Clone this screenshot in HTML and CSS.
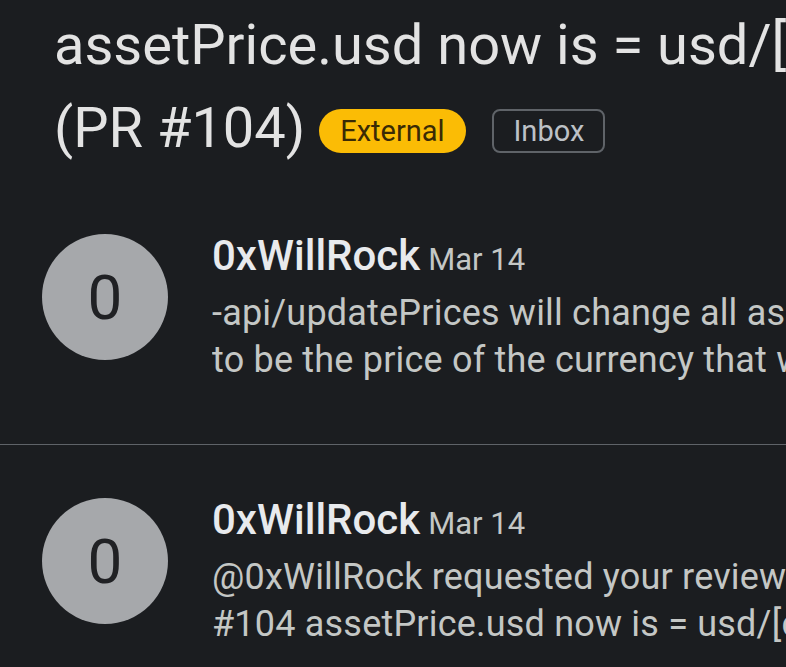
FILE: index.html
```html
<!DOCTYPE html>
<html lang="en">
  <head>
    <meta charset="UTF-8" />
    <meta name="viewport" content="width=device-width, initial-scale=1.0" />
    <title>assetPrice.usd now is = usd/[currency] (PR #104)</title>
    <link rel="stylesheet" href="styles.css">
  </head>
  <body>
    <div class="thread">
      <div class="header">
        <h1 class="subject">
          <span class="subject-line">assetPrice.usd now is = usd/[currency]</span>
          <span class="subject-line">(PR #104)
            <span class="label label-external">External</span>
            <span class="label label-inbox">Inbox</span>
          </span>
        </h1>
      </div>

      <div class="message">
        <div class="avatar">0</div>
        <div class="message-body">
          <p class="sender">
            <span class="sender-name">0xWillRock</span>
            <span class="date">Mar 14</span>
          </p>
          <p class="snippet">
            <span class="snippet-line">-api/updatePrices will change all assetPrice.usd values</span>
            <span class="snippet-line">to be the price of the currency that was passed in</span>
          </p>
        </div>
      </div>

      <div class="message">
        <div class="avatar">0</div>
        <div class="message-body">
          <p class="sender">
            <span class="sender-name">0xWillRock</span>
            <span class="date">Mar 14</span>
          </p>
          <p class="snippet">
            <span class="snippet-line">@0xWillRock requested your review on: 0xWillRock/api PR</span>
            <span class="snippet-line">#104 assetPrice.usd now is = usd/[currency].</span>
          </p>
        </div>
      </div>
    </div>
  </body>
</html>
```

FILE: styles.css
```css
html,
body {
  margin: 0;
  height: 100%;
  background: #1b1d20;
  font-family: Roboto, "Noto Sans", Arial, sans-serif;
  color: #e3e3e3;
  overflow: hidden;
}
* {
  box-sizing: border-box;
}
p {
  margin: 0;
}
.thread {
  width: 100%;
  overflow: hidden;
}
.header {
  padding: 4px 0 10px 54px;
}
.subject {
  margin: 0;
  font-size: 56px;
  font-weight: 400;
  line-height: 83px;
  white-space: nowrap;
}
.subject-line {
  display: block;
}
.label {
  display: inline-block;
  vertical-align: 6px;
  height: 44px;
  line-height: 44px;
  font-size: 29px;
}
.label-external {
  margin-left: 0;
  padding: 0 21px;
  border-radius: 22px;
  background: #fbbc05;
  color: #3a2a05;
}
.label-inbox {
  margin-left: 13px;
  padding: 0 19px;
  border: 2px solid #5f6368;
  border-radius: 8px;
  line-height: 40px;
  color: #bdc1c6;
}
.message {
  display: flex;
  align-items: flex-start;
  gap: 44px;
  padding: 54px 0 60px 42px;
}
.message + .message {
  border-top: 1px solid #5f6368;
  padding-top: 53px;
}
.avatar {
  flex: none;
  width: 126px;
  height: 126px;
  border-radius: 50%;
  background: #a6a8ab;
  color: #202124;
  display: flex;
  align-items: center;
  justify-content: center;
  font-size: 62px;
}
.message-body {
  min-width: 0;
  flex: 1;
  overflow: hidden;
}
.sender {
  white-space: nowrap;
  line-height: 44px;
}
.sender-name {
  font-size: 42px;
  font-weight: 500;
  color: #e8eaed;
}
.date {
  margin-left: 4px;
  font-size: 31px;
  color: #c4c7c5;
}
.snippet {
  margin-top: 3px;
  font-size: 36px;
  line-height: 47px;
  letter-spacing: 0.2px;
  color: #c4c7c5;
  white-space: nowrap;
}
.snippet-line {
  display: block;
}
```
